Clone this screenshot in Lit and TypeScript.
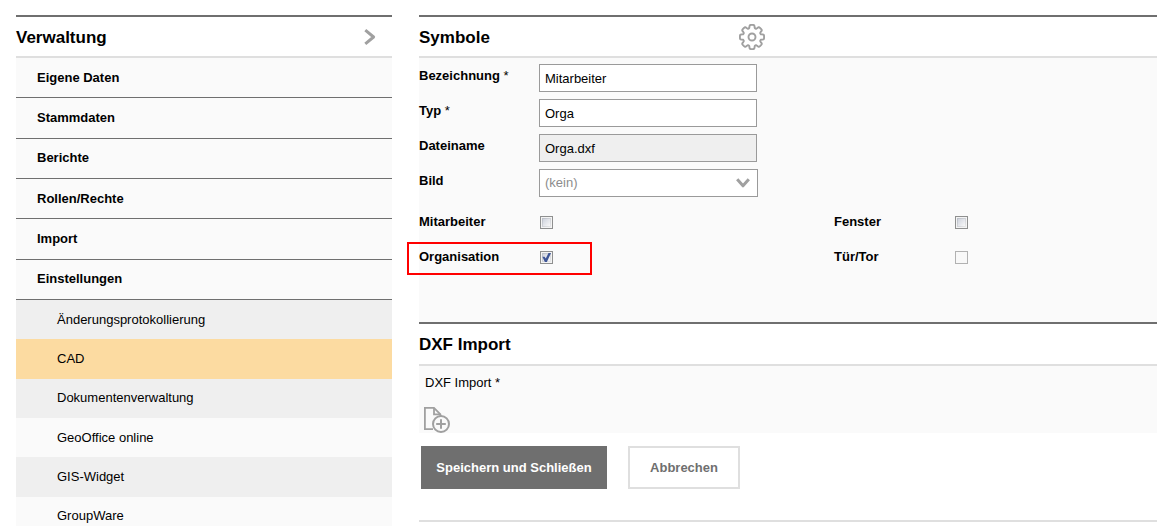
import { LitElement, html, css } from "lit";
import { customElement, state } from "lit/decorators.js";
import { classMap } from "lit/directives/class-map.js";

const MENU = ["Eigene Daten", "Stammdaten", "Berichte", "Rollen/Rechte", "Import", "Einstellungen"];
const SETTINGS = [
  "Änderungsprotokollierung",
  "CAD",
  "Dokumentenverwaltung",
  "GeoOffice online",
  "GIS-Widget",
  "GroupWare",
];

/** Outline of a gear with eight broad teeth and narrow notches, centred on 13,13. */
const gearPath = () => {
  const points: string[] = [];
  const steps = 144;
  for (let i = 0; i < steps; i++) {
    const angle = (i / steps) * Math.PI * 2;
    const wave = Math.cos(angle * 8);
    const radius = 10.5 + 1.6 * Math.tanh((wave + 0.4) * 2.6);
    points.push(`${(13 + radius * Math.cos(angle)).toFixed(2)} ${(13 + radius * Math.sin(angle)).toFixed(2)}`);
  }
  return `M${points.join("L")}Z`;
};

@customElement("admin-menu")
export class AdminMenu extends LitElement {
  @state() private active = "CAD";

  static styles = css`
    :host {
      display: block;
      border-top: 2px solid #6f6f6f;
    }
    .head {
      display: flex;
      align-items: center;
      justify-content: space-between;
      height: 39px;
      padding-right: 16px;
      border-bottom: 2px solid #dfdfdf;
    }
    h2 {
      margin: 0;
      padding-top: 2px;
      font-size: 17px;
      line-height: 20px;
    }
    .toggle {
      display: flex;
      padding: 0;
      border: 0;
      background: none;
    }
    ul {
      display: grid;
      grid-auto-rows: 1fr;
      margin: 0;
      padding: 0;
      list-style: none;
    }
    li {
      display: grid;
      background: #fafafa;
    }
    .main {
      min-height: 242px;
    }
    .main li {
      border-bottom: 1px solid #6f6f6f;
    }
    .sub {
      min-height: 236px;
    }
    a {
      display: flex;
      align-items: center;
      color: #000;
      text-decoration: none;
      line-height: 16px;
    }
    .main a {
      padding-left: 21px;
      font-weight: bold;
    }
    .sub a {
      padding-left: 41px;
    }
    .sub li:nth-child(odd) {
      background: #efefef;
    }
    .sub a.active {
      background: #fcdba1;
    }
  `;

  render() {
    return html`
      <div class="head">
        <h2>Verwaltung</h2>
        <button class="toggle" aria-label="Menü umschalten">
          <svg width="12" height="16" viewBox="0 0 12 16" fill="none" stroke="#a0a0a0" stroke-width="3">
            <path d="M1.3 1.2 9.6 8 1.3 14.8" stroke-linejoin="round" />
          </svg>
        </button>
      </div>
      <ul class="main">
        ${MENU.map((name) => html`<li><a href="#">${name}</a></li>`)}
      </ul>
      <ul class="sub">
        ${SETTINGS.map(
          (name) => html`<li>
            <a href="#" class=${classMap({ active: name === this.active })} @click=${() => (this.active = name)}
              >${name}</a
            >
          </li>`
        )}
      </ul>
    `;
  }
}

@customElement("symbol-form")
export class SymbolForm extends LitElement {
  static styles = css`
    :host {
      display: block;
    }
    .head {
      display: grid;
      grid-template-columns: 320px 1fr;
      align-items: center;
      height: 39px;
      border-top: 2px solid #6f6f6f;
      border-bottom: 2px solid #dfdfdf;
    }
    .head.import {
      height: 40px;
    }
    h2 {
      margin: 0;
      padding-top: 2px;
      font-size: 17px;
      line-height: 20px;
    }
    .icon {
      display: flex;
      justify-self: start;
      padding: 0;
      border: 0;
      background: none;
    }
    .panel {
      background: #fafafa;
      padding: 6px 0 49px;
    }
    .fields {
      display: grid;
      gap: 7px;
    }
    .field {
      display: grid;
      grid-template-columns: 120px 1fr;
    }
    .field > label {
      padding-top: 4px;
      font-weight: bold;
      line-height: 16px;
    }
    .star {
      font-weight: normal;
    }
    .text,
    select {
      box-sizing: border-box;
      width: 218px;
      height: 28px;
      margin: 0;
      padding: 0 5px;
      border: 1px solid #9a9a9a;
      border-radius: 0;
      background: #fff;
      color: #000;
      font: inherit;
      appearance: none;
    }
    .text:read-only {
      background: #efefef;
    }
    .select {
      position: relative;
      width: 219px;
    }
    .select select {
      width: 219px;
      color: #8c8c8c;
    }
    .select svg {
      position: absolute;
      right: 8px;
      top: 9px;
      pointer-events: none;
    }
    .checks {
      display: grid;
      grid-template-columns: 415fr 323fr;
      row-gap: 7px;
      padding-top: 13px;
    }
    .check {
      position: relative;
      min-height: 28px;
    }
    .marked::after {
      content: "";
      position: absolute;
      box-sizing: border-box;
      left: -12px;
      top: -3px;
      width: 185px;
      height: 33px;
      border: 2px solid #f00;
      pointer-events: none;
    }
    .box {
      appearance: none;
      box-sizing: border-box;
      width: 13px;
      height: 13px;
      margin: 6px 0 0 1px;
      border: 1px solid #8e8f8f;
      padding: 1px;
      background:
        linear-gradient(135deg, #d0d4de, #f8f8f8) 2px 2px / 7px 7px no-repeat,
        linear-gradient(135deg, #b8bdc6, #e9e9ea) 1px 1px / 9px 9px no-repeat,
        #f4f4f4;
    }
    .box:disabled {
      border-color: #b1b1b1;
      background: #f8f8f8;
    }
    .box:checked::before {
      content: "";
      display: block;
      width: 9px;
      height: 9px;
      background: #3d5596;
      clip-path: polygon(4% 42%, 28% 42%, 42% 62%, 72% 0, 100% 0, 54% 100%, 32% 100%);
    }
    .upload {
      display: grid;
      gap: 16px;
      justify-items: start;
      padding: 9px 5px 0;
      background: #fafafa;
    }
    .upload label {
      padding-left: 1px;
      line-height: 16px;
    }
    .actions {
      display: flex;
      gap: 21px;
      padding: 13px 2px 31px;
      border-bottom: 2px solid #dfdfdf;
    }
    .action {
      box-sizing: border-box;
      height: 43px;
      padding: 0 13px;
      border: 2px solid #6f6f6f;
      background: #6f6f6f;
      color: #fff;
      font: bold 13px/16px "Liberation Sans", Arial, sans-serif;
      min-width: 186px;
    }
    .action.plain {
      min-width: 112px;
      border-color: #dfdfdf;
      background: #fff;
      color: #6f6f6f;
    }
  `;

  private check(id: string, label: string, checked = false, disabled = false, marked = false) {
    return html`<div class=${classMap({ field: true, check: true, marked })}>
      <label for=${id}>${label}</label>
      <input class="box" type="checkbox" id=${id} .checked=${checked} ?disabled=${disabled} />
    </div>`;
  }

  render() {
    return html`
      <div class="head">
        <h2>Symbole</h2>
        <button class="icon" aria-label="Optionen">
          <svg width="26" height="26" viewBox="0 0 26 26" fill="none" stroke="#a0a0a0" stroke-width="1.9">
            <path d=${gearPath()} stroke-linejoin="round" />
            <circle cx="13" cy="13" r="3.5" />
          </svg>
        </button>
      </div>
      <div class="panel">
        <div class="fields">
          <div class="field">
            <label for="name">Bezeichnung <span class="star">*</span></label>
            <input class="text" id="name" type="text" value="Mitarbeiter" />
          </div>
          <div class="field">
            <label for="type">Typ <span class="star">*</span></label>
            <input class="text" id="type" type="text" value="Orga" />
          </div>
          <div class="field">
            <label for="file">Dateiname</label>
            <input class="text" id="file" type="text" value="Orga.dxf" readonly />
          </div>
          <div class="field">
            <label for="image">Bild</label>
            <div class="select">
              <select id="image">
                <option>(kein)</option>
              </select>
              <svg width="14" height="10" viewBox="0 0 14 10" fill="none" stroke="#a0a0a0" stroke-width="3">
                <path d="M1.2 1.2 7 7.8 12.8 1.2" stroke-linejoin="round" />
              </svg>
            </div>
          </div>
        </div>
        <div class="checks">
          ${this.check("employee", "Mitarbeiter")} ${this.check("window", "Fenster")}
          ${this.check("organisation", "Organisation", true, false, true)}
          ${this.check("door", "Tür/Tor", false, true)}
        </div>
      </div>
      <div class="head import"><h2>DXF Import</h2></div>
      <div class="upload">
        <label for="upload">DXF Import *</label>
        <button class="icon" id="upload">
          <svg width="26" height="26" viewBox="0 0 26 26" fill="none" stroke="#a0a0a0" stroke-width="1.8">
            <path d="M9 22.2H.9V.9H10L16.4 7.3v1.6" />
            <path d="M10 .9V7.3h6.4" />
            <circle cx="17" cy="17" r="8" stroke-width="2" />
            <path d="M17 12.2v9.6M12.2 17h9.6" stroke-width="2" />
          </svg>
        </button>
      </div>
      <div class="actions">
        <button class="action">Speichern und Schließen</button>
        <button class="action plain">Abbrechen</button>
      </div>
    `;
  }
}

@customElement("app-root")
export class AppRoot extends LitElement {
  static styles = css`
    :host {
      display: grid;
      grid-template-columns: 376fr 738fr;
      align-items: start;
      gap: 27px;
      box-sizing: border-box;
      height: 100vh;
      overflow: hidden;
      padding: 15px 16px 0;
      background: #fff;
      color: #000;
      font: 13px/16px "Liberation Sans", Arial, sans-serif;
    }
  `;

  render() {
    return html`<admin-menu></admin-menu><symbol-form></symbol-form>`;
  }
}
